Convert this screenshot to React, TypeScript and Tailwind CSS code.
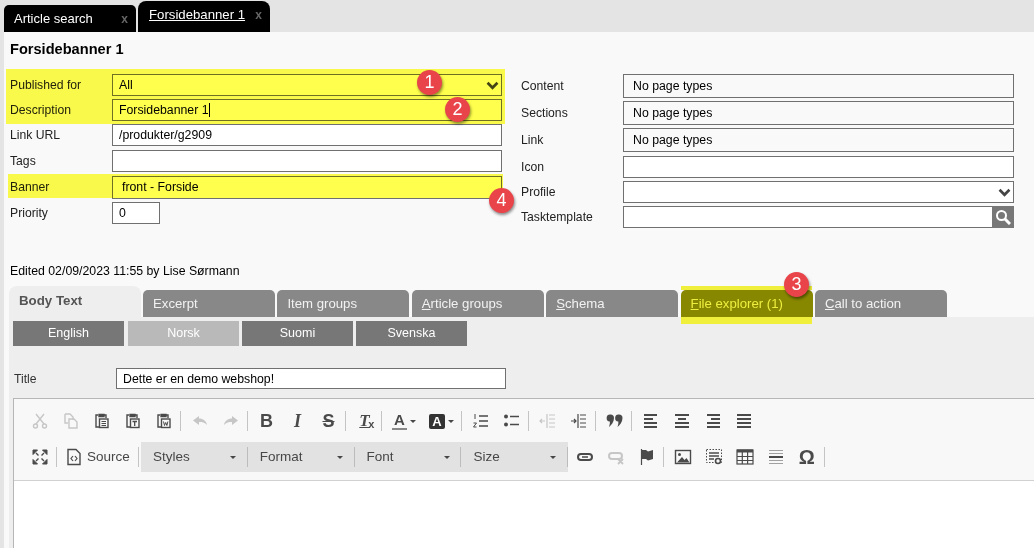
import type { ReactNode } from 'react'

const font = { fontFamily: '"Liberation Sans", Arial, sans-serif' }

function Icon({ children, light }: { children: ReactNode; light?: boolean }) {
  return (
    <svg
      width="18"
      height="18"
      viewBox="0 0 18 18"
      fill="none"
      stroke="currentColor"
      strokeWidth="1.4"
      className={light ? 'text-[#c6c6c6]' : 'text-[#4a4a4a]'}
    >
      {children}
    </svg>
  )
}

function Btn({ children, w = 'w-[31px]' }: { children: ReactNode; w?: string }) {
  return <div className={`${w} h-[24px] flex items-center justify-center shrink-0`}>{children}</div>
}

function Sep() {
  return <div className="w-px h-[20px] bg-[#c4c4c4] ml-[1px] mr-[3px] shrink-0" />
}

function Caret() {
  return <div className="w-0 h-0 border-x-[3px] border-x-transparent border-t-[3px] border-t-[#474747]" />
}

function Combo({ label }: { label: string }) {
  return (
    <div className="flex items-center h-[30px] w-[106.8px] shrink-0">
      <span className="ml-[12px] text-[13.5px] text-[#474747] w-[77px]">{label}</span>
      <Caret />
      <div className="flex-1" />
      <div className="w-px h-[20px] bg-[#bcbcbc]" />
    </div>
  )
}

function Paste({ mark }: { mark: ReactNode }) {
  return (
    <Icon>
      <path d="M5 3H3v12h3" />
      <path d="M6 2.500h5v2H6z" fill="currentColor" />
      <path d="M11 3h2v3" />
      <rect x="6.500" y="7" width="8.500" height="8.500" />
      {mark}
    </Icon>
  )
}

function Lines({ rows }: { rows: [number, number][] }) {
  return (
    <Icon>
      {rows.map(([a, b], i) => (
        <path key={i} d={`M${a} ${3 + i * 4}H${b}`} strokeWidth="2" />
      ))}
    </Icon>
  )
}

function Chevron() {
  return (
    <svg width="13" height="9" viewBox="0 0 14 10" fill="none" stroke="#444" strokeWidth="3">
      <path d="M1.500 2 7 7.500 12.500 2" />
    </svg>
  )
}

function Input({ value, className = '' }: { value?: string; className?: string }) {
  return (
    <div className={`border border-[#707070] bg-white flex items-center pl-[6px] text-[12.3px] text-black shrink-0 ${className}`}>
      {value}
    </div>
  )
}

function Row({ label, children, className = '' }: { label: string; children: ReactNode; className?: string }) {
  return (
    <div className={`flex items-center ${className}`}>
      <div className="w-[102px] text-[12.2px] text-[#222] shrink-0">{label}</div>
      {children}
    </div>
  )
}

function DarkTab({ label, hot }: { label: ReactNode; hot?: boolean }) {
  return (
    <div
      className={`w-[132px] h-[27px] rounded-t-[5px] flex items-center pl-[10px] pt-px text-[13.2px] shrink-0 ${
        hot ? 'bg-[#888800] text-[#eeee40]' : 'bg-[#888] text-[#f2f2f2]'
      }`}
    >
      {label}
    </div>
  )
}

function Lang({ label, active, className = '' }: { label: string; active?: boolean; className?: string }) {
  return (
    <div
      className={`w-[111px] h-[25px] flex items-center justify-center text-[12.5px] ${
        active ? 'bg-[#b9b9b9] text-white' : 'bg-[#777] text-white'
      } ${className}`}
    >
      {label}
    </div>
  )
}

function Badge({ n, className }: { n: number; className: string }) {
  return (
    <div
      className={`absolute w-[25px] h-[25px] rounded-full bg-[#e8444a] text-white text-[18px] flex items-center justify-center shadow-[1px_2px_3px_rgba(0,0,0,0.45)] ${className}`}
    >
      {n}
    </div>
  )
}

export default function App() {
  return (
    <div style={font} className="relative w-[1034px] h-[548px] overflow-hidden bg-[#e4e4e4]">
      {/* Top tabs */}
      <div className="h-[32px] pl-[4px] flex items-end gap-[2px]">
        <div className="w-[132px] h-[27px] bg-black rounded-t-[5px] flex items-center justify-between pl-[10px] pr-[8px] text-[13px] text-white">
          <span>Article search</span>
          <span className="text-[#666] font-bold text-[12px]">x</span>
        </div>
        <div className="w-[132px] h-[31px] bg-black rounded-t-[8px] flex items-center justify-between pl-[11px] pr-[8px] pb-[3px] text-[13.2px] text-white">
          <span className="underline">Forsidebanner 1</span>
          <span className="text-[#666] font-bold text-[12px]">x</span>
        </div>
      </div>

      <div className="ml-[4px] h-[516px] bg-[#f9f9f9] relative">
        <h1 className="pl-[6px] pt-[9px] h-[37px] text-[14.6px] leading-[16px] font-bold text-black">Forsidebanner 1</h1>

        {/* Form */}
        <div className="flex">
          <div className="w-[498px] pl-[6px] shrink-0">
            <Row label="Published for" className="mt-[5px]">
              <div className="w-[390px] h-[22px] border border-[#707070] bg-white flex items-center justify-between pl-[6px] pr-[2px] text-[12.3px]">
                All
                <Chevron />
              </div>
            </Row>
            <Row label="Description" className="mt-[3px]">
              <div className="w-[390px] h-[22px] border border-[#707070] bg-white flex items-center pl-[6px] text-[12.3px]">
                Forsidebanner 1<span className="w-px h-[14px] bg-black" />
              </div>
            </Row>
            <Row label="Link URL" className="mt-[3px]">
              <Input value="/produkter/g2909" className="w-[390px] h-[22px]" />
            </Row>
            <Row label="Tags" className="mt-[4px]">
              <Input className="w-[390px] h-[22px]" />
            </Row>
            <Row label="Banner" className="mt-[4px]">
              <Input value="front - Forside" className="w-[390px] h-[23px] !pl-[9px]" />
            </Row>
            <Row label="Priority" className="mt-[3px]">
              <Input value="0" className="w-[48px] h-[22px]" />
            </Row>
          </div>

          <div className="flex-1 pl-[19px]">
            <Row label="Content" className="mt-[5px]">
              <Input value="No page types" className="w-[391px] h-[24px] !bg-[#f9f9f9] !pl-[9px]" />
            </Row>
            <Row label="Sections" className="mt-[3px]">
              <Input value="No page types" className="w-[391px] h-[24px] !bg-[#f9f9f9] !pl-[9px]" />
            </Row>
            <Row label="Link" className="mt-[3px]">
              <Input value="No page types" className="w-[391px] h-[24px] !bg-[#f9f9f9] !pl-[9px]" />
            </Row>
            <Row label="Icon" className="mt-[4px]">
              <Input className="w-[391px] h-[22px]" />
            </Row>
            <Row label="Profile" className="mt-[3px]">
              <div className="w-[391px] h-[22px] border border-[#707070] bg-white flex items-center justify-end pr-[2px] shrink-0">
                <Chevron />
              </div>
            </Row>
            <Row label="Tasktemplate" className="mt-[3px]">
              <div className="w-[391px] h-[22px] border border-[#707070] bg-white flex justify-end shrink-0">
                <div className="w-[22px] -my-px -mr-px bg-[#777] flex items-center justify-center">
                  <svg width="16" height="16" viewBox="0 0 16 16" fill="none" stroke="#fff" strokeWidth="2">
                    <circle cx="6.500" cy="6.500" r="4.500" />
                    <path d="m10 10 5 5" strokeWidth="3" />
                  </svg>
                </div>
              </div>
            </Row>
          </div>
        </div>

        <div className="pl-[6px] mt-[36px] h-[15px] text-[12.3px] leading-[15px] text-black">Edited 02/09/2023 11:55 by Lise Sørmann</div>

        {/* Main tabs */}
        <div className="mt-[7px] ml-[5px] flex items-end h-[31px]">
          <div className="w-[132px] h-[31px] bg-[#eee] rounded-t-[8px] pl-[10px] pt-[5px] text-[13.3px] font-bold text-[#555] shrink-0">Body Text</div>
          <div className="flex gap-[2.4px] ml-[2px]">
            <DarkTab label="Excerpt" />
            <DarkTab label="Item groups" />
            <DarkTab label={<span><u>A</u>rticle groups</span>} />
            <DarkTab label={<span><u>S</u>chema</span>} />
            <DarkTab hot label={<span><u>F</u>ile explorer (1)</span>} />
            <DarkTab label={<span><u>C</u>all to action</span>} />
          </div>
        </div>

        {/* Tab body */}
        <div className="ml-[5px] h-[232px] bg-[#eee] pl-[4px]">
          <div className="pt-[4px] flex gap-[3px]">
            <Lang label="English" className="mr-px" />
            <Lang label="Norsk" active />
            <Lang label="Suomi" />
            <Lang label="Svenska" />
          </div>
          <div className="mt-[22px] flex items-center h-[21px] text-[12.2px]">
            <div className="w-[103px] pl-px pt-px text-[#333]">Title</div>
            <Input value="Dette er en demo webshop!" className="w-[390px] h-[21px] pt-px" />
          </div>

          {/* Editor */}
          <div className="mt-[9px] border-t border-l border-[#b6b6b6] h-[151px] bg-white">
            <div className="bg-[#f8f8f8] h-[82px] border-b border-[#d1d1d1] pt-[10px] pl-[10px]">
              <div className="flex items-center h-[24px]">
                <Btn>
                  <Icon light>
                    <path d="M5 2l8 10M13 2 5 12" />
                    <circle cx="4.500" cy="14" r="2" />
                    <circle cx="13.500" cy="14" r="2" />
                  </Icon>
                </Btn>
                <Btn>
                  <Icon light>
                    <path d="M3 2h5l3 3v3M3 2v9h3" />
                    <path d="M7 7h5l3 3v6H7z" />
                  </Icon>
                </Btn>
                <Btn>
                  <Paste mark={<path d="M8.500 9.500h4.500M8.500 11.500h4.500M8.500 13.500h4.500" strokeWidth="1" />} />
                </Btn>
                <Btn>
                  <Paste mark={<path d="M8.500 9.500h4.500M10.700 9.500v4.500" strokeWidth="1.300" />} />
                </Btn>
                <Btn>
                  <Paste mark={<path d="m8.500 9.500 1 4 1.200-3 1.200 3 1-4" strokeWidth="1" />} />
                </Btn>
                <Sep />
                <Btn>
                  <Icon light>
                    <path d="M8 4 2 8.500 8 13v-3c3 0 6 .5 8 3-.5-4-4-6.500-8-6.500z" fill="currentColor" stroke="none" />
                  </Icon>
                </Btn>
                <Btn>
                  <Icon light>
                    <path d="M10 4l6 4.500L10 13v-3c-3 0-6 .5-8 3 .5-4 4-6.500 8-6.500z" fill="currentColor" stroke="none" />
                  </Icon>
                </Btn>
                <Sep />
                <Btn>
                  <span className="text-[18px] font-bold text-[#4a4a4a]">B</span>
                </Btn>
                <Btn>
                  <span className="text-[18px] font-bold italic text-[#4a4a4a]" style={{ fontFamily: '"Liberation Serif", serif' }}>
                    I
                  </span>
                </Btn>
                <Btn>
                  <span className="text-[18px] font-bold text-[#4a4a4a] line-through">S</span>
                </Btn>
                <Sep />
                <Btn>
                  <span className="relative text-[17px] font-bold italic text-[#4a4a4a] underline" style={{ fontFamily: '"Liberation Serif", serif' }}>
                    T
                    <span className="absolute left-[9px] top-[8px] not-italic text-[11px] no-underline" style={font}>
                      x
                    </span>
                  </span>
                </Btn>
                <Sep />
                <Btn w="w-[38px]">
                  <span className="text-[15px] font-bold text-[#4a4a4a] border-b-2 border-[#888] leading-[16px] px-[2px]">A</span>
                  <span className="ml-[3px]"><Caret /></span>
                </Btn>
                <Btn w="w-[37px]">
                  <span className="block w-[16px] h-[15px] rounded-[2px] bg-[#333] text-white text-[13px] font-bold leading-[15px] text-center">A</span>
                  <span className="ml-[3px]"><Caret /></span>
                </Btn>
                <Sep />
                <Btn>
                  <Icon>
                    <path d="M7 4h9M7 9h9M7 14h9" strokeWidth="1.500" />
                    <path d="M3 2v5M1.500 11h3l-3 4h3" strokeWidth="1" />
                  </Icon>
                </Btn>
                <Btn>
                  <Icon>
                    <path d="M7 4.500h9M7 12.500h9" strokeWidth="1.500" />
                    <circle cx="3" cy="4.500" r="2" fill="currentColor" stroke="none" />
                    <circle cx="3" cy="12.500" r="2" fill="currentColor" stroke="none" />
                  </Icon>
                </Btn>
                <Sep />
                <Btn>
                  <Icon light>
                    <path d="M8 2v14M10 3h6M10 7h6M10 11h6M10 15h6M1 9h5M3 7 1 9l2 2" strokeWidth="1.200" />
                  </Icon>
                </Btn>
                <Btn>
                  <Icon>
                    <path d="M8 2v14M10 3h6M10 7h6M10 11h6M10 15h6M1 9h5M4 7l2 2-2 2" strokeWidth="1.200" />
                  </Icon>
                </Btn>
                <Sep />
                <Btn>
                  <Icon>
                    <path d="M4.500 2.500a3.500 3.500 0 0 1 3.500 3.500c0 4-2.500 7-5 9 .800-2.500 1-4 .8-5.500a3.500 3.500 0 0 1 .7-7zM13 2.500a3.500 3.500 0 0 1 3.500 3.500c0 4-2.500 7-5 9 .800-2.500 1-4 .8-5.500a3.500 3.500 0 0 1 .7-7z" fill="currentColor" stroke="none" />
                  </Icon>
                </Btn>
                <Sep />
                <Btn><Lines rows={[[2, 15], [2, 11], [2, 15], [2, 15]]} /></Btn>
                <Btn><Lines rows={[[2, 16], [5, 13], [2, 16], [2, 16]]} /></Btn>
                <Btn><Lines rows={[[3, 16], [7, 16], [3, 16], [3, 16]]} /></Btn>
                <Btn><Lines rows={[[2, 16], [2, 16], [2, 16], [2, 16]]} /></Btn>
              </div>

              <div className="flex items-center h-[30px] mt-[9px]">
                <Btn>
                  <Icon>
                    <path d="M2 2h4.500L2 6.500zM16 2h-4.500L16 6.500zM2 16h4.500L2 11.500zM16 16h-4.500L16 11.500z" fill="currentColor" stroke="currentColor" strokeWidth="1" />
                    <path d="m5 5 2.500 2.500M13 5l-2.500 2.500M5 13l2.500-2.500M13 13l-2.500-2.500" />
                  </Icon>
                </Btn>
                <Sep />
                <div className="w-[77px] h-[24px] flex items-center pl-[5px] gap-[4px] text-[13.5px] text-[#474747] shrink-0">
                  <Icon>
                    <path d="M3 1.500h8l4 4v11H3z" />
                    <path d="m8 8-2 2.500L8 13M10 8l2 2.500L10 13" strokeWidth="1.200" />
                  </Icon>
                  Source
                </div>
                <div className="w-px h-[20px] bg-[#c4c4c4] mr-[2px] ml-[1px] shrink-0" />
                <div className="flex bg-[#e2e2e2] shrink-0">
                  <Combo label="Styles" />
                  <Combo label="Format" />
                  <Combo label="Font" />
                  <Combo label="Size" />
                </div>
                <div className="w-px shrink-0" />
                <Btn>
                  <Icon>
                    <rect x="2" y="6" width="14" height="6" rx="3" strokeWidth="2" />
                    <path d="M6 9h6" strokeWidth="1.500" />
                  </Icon>
                </Btn>
                <Btn>
                  <Icon light>
                    <rect x="2" y="5" width="13" height="6" rx="3" strokeWidth="2" />
                    <path d="m11 11 5 5M16 11l-5 5" strokeWidth="1.800" />
                  </Icon>
                </Btn>
                <Btn>
                  <Icon>
                    <path d="M3.500 1v16" strokeWidth="1.200" />
                    <path d="M4 2h4l2 1.500L15 2v9l-5 1.500L8 11H4z" fill="currentColor" stroke="none" />
                  </Icon>
                </Btn>
                <Sep />
                <Btn>
                  <Icon>
                    <rect x="1.500" y="2.500" width="15" height="13" />
                    <circle cx="5.500" cy="6.500" r="1.500" fill="currentColor" stroke="none" />
                    <path d="M3 14.500 8 9l2.500 3 2-2 3 4.500z" fill="currentColor" stroke="none" />
                  </Icon>
                </Btn>
                <Btn>
                  <Icon>
                    <rect x="1.500" y="1.500" width="15" height="13" strokeDasharray="1.500 1.500" strokeWidth="1" />
                    <path d="M4 5h10M4 8h10M4 11h5" strokeWidth="1.500" />
                    <circle cx="13" cy="13" r="2.500" fill="#f8f8f8" strokeWidth="1.600" />
                  </Icon>
                </Btn>
                <Btn>
                  <Icon>
                    <rect x="1" y="2" width="16" height="14" strokeWidth="1.200" />
                    <path d="M1 3h16" strokeWidth="3" />
                    <path d="M6.300 3v13M11.600 3v13M1 8.500h16M1 12.500h16" strokeWidth="1.200" />
                  </Icon>
                </Btn>
                <Btn>
                  <Icon>
                    <path d="M2 2.500h14M2 5.500h14M2 12.500h14M2 15.500h14" strokeWidth="1.200" className="opacity-50" />
                    <path d="M2 9h14" strokeWidth="2" />
                  </Icon>
                </Btn>
                <Btn>
                  <span className="text-[20px] font-bold text-[#4a4a4a]">Ω</span>
                </Btn>
                <div className="w-px h-[20px] bg-[#c4c4c4] ml-[2px] shrink-0" />
              </div>
            </div>
          </div>
        </div>
      </div>

      {/* Annotation highlights */}
      <div className="absolute left-[6px] top-[69px] w-[499px] h-[55px] bg-[#ffff4d] mix-blend-multiply" />
      <div className="absolute left-[8px] top-[174px] w-[495px] h-[24px] bg-[#ffff4d] mix-blend-multiply" />
      <div className="absolute left-[681px] top-[286px] w-[131px] h-[4px] bg-[#f0f03c]" />
      <div className="absolute left-[681px] top-[317px] w-[131px] h-[7px] bg-[#f0f03c]" />

      <Badge n={1} className="left-[417px] top-[70px]" />
      <Badge n={2} className="left-[445px] top-[97px]" />
      <Badge n={3} className="left-[784px] top-[272px]" />
      <Badge n={4} className="left-[489px] top-[188px]" />
    </div>
  )
}
